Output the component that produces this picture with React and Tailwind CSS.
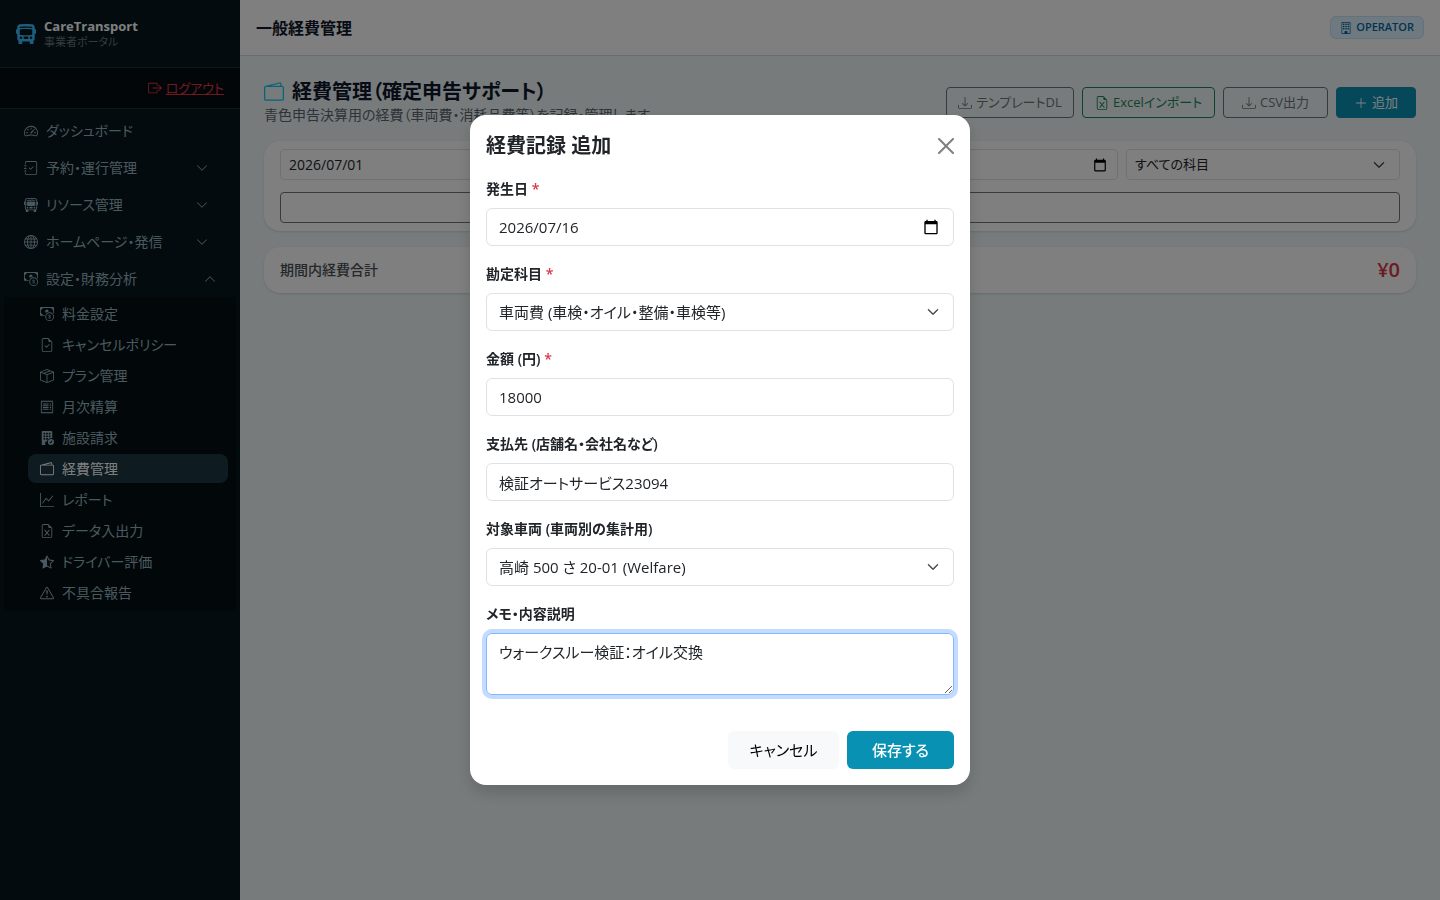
import {
  BsBoxArrowRight,
  BsBoxSeam,
  BsBuilding,
  BsBuildingFillCheck,
  BsBusFront,
  BsBusFrontFill,
  BsCashCoin,
  BsChevronDown,
  BsChevronUp,
  BsDownload,
  BsExclamationTriangle,
  BsFileEarmarkCheck,
  BsFileEarmarkExcel,
  BsGlobe,
  BsGraphUp,
  BsJournalCheck,
  BsPlusLg,
  BsReceipt,
  BsSpeedometer2,
  BsStarHalf,
  BsWallet2,
} from 'react-icons/bs';

const MENU = [
  { label: 'ダッシュボード', icon: BsSpeedometer2 },
  { label: '予約・運行管理', icon: BsJournalCheck, group: true },
  { label: 'リソース管理', icon: BsBusFront, group: true },
  { label: 'ホームページ・発信', icon: BsGlobe, group: true },
  { label: '設定・財務分析', icon: BsCashCoin, group: true, open: true },
];

const SUBMENU = [
  { label: '料金設定', icon: BsCashCoin },
  { label: 'キャンセルポリシー', icon: BsFileEarmarkCheck },
  { label: 'プラン管理', icon: BsBoxSeam },
  { label: '月次精算', icon: BsReceipt },
  { label: '施設請求', icon: BsBuildingFillCheck },
  { label: '経費管理', icon: BsWallet2, active: true },
  { label: 'レポート', icon: BsGraphUp },
  { label: 'データ入出力', icon: BsFileEarmarkExcel },
  { label: 'ドライバー評価', icon: BsStarHalf },
  { label: '不具合報告', icon: BsExclamationTriangle },
];

function CalendarIcon({ className }) {
  return (
    <svg viewBox="0 0 24 24" className={className} fill="currentColor" aria-hidden="true">
      <path d="M20 3h-1V1h-2v2H7V1H5v2H4c-1.1 0-2 .9-2 2v16c0 1.100.9 2 2 2h16c1.100 0 2-.9 2-2V5c0-1.100-.9-2-2-2zm0 18H4V8h16v13z" />
    </svg>
  );
}

function CloseIcon() {
  return (
    <svg viewBox="0 0 16 16" className="size-4" fill="currentColor" aria-hidden="true">
      <path d="M.293.293a1 1 0 0 1 1.414 0L8 6.586 14.293.293a1 1 0 1 1 1.414 1.414L9.414 8l6.293 6.293a1 1 0 0 1-1.414 1.414L8 9.414l-6.293 6.293a1 1 0 0 1-1.414-1.414L6.586 8 .293 1.707a1 1 0 0 1 0-1.414z" />
    </svg>
  );
}

function Sidebar() {
  return (
    <aside className="w-60 shrink-0 bg-[#06161c] text-sm text-[#94b3bf]">
      <div className="flex h-17 items-center gap-2 border-b border-[#1c333d] px-4">
        <BsBusFrontFill size={20} className="text-[#38bdf8]" />
        <div>
          <p className="text-[13px] leading-4 font-bold text-white">CareTransport</p>
          <p className="text-[11px] leading-4 text-[#6c757d]">事業者ポータル</p>
        </div>
      </div>
      <div className="flex h-[41px] items-center justify-end border-b border-[#1c333d] bg-[#040d11] px-4">
        <a href="#logout" className="flex items-center gap-1 text-[13px] text-[#dc3545]">
          <BsBoxArrowRight size={14} />
          <span className="underline">ログアウト</span>
        </a>
      </div>
      <nav className="pt-[3px]">
        {MENU.map(({ label, icon: Icon, group, open }) => (
          <a key={label} href="#menu" className="flex h-[37px] items-center gap-2 px-6">
            <Icon size={14} />
            <span className="flex-1">{label}</span>
            {group && (open ? <BsChevronUp size={12} /> : <BsChevronDown size={12} className="mr-2" />)}
          </a>
        ))}
        <ul className="mx-1 flex flex-col gap-0.5 bg-[#050f14] pt-0.5 pb-1">
          {SUBMENU.map(({ label, icon: Icon, active }) => (
            <li key={label} className="pr-2 pl-6">
              <a
                href="#submenu"
                className={`flex h-[29px] items-center gap-2 rounded-lg px-3 ${active ? 'bg-[#1c3640] text-white' : ''}`}
              >
                <Icon size={14} />
                {label}
              </a>
            </li>
          ))}
        </ul>
      </nav>
    </aside>
  );
}

function ToolButton({ icon: Icon, className, children }) {
  return (
    <button
      type="button"
      className={`flex h-[31px] items-center justify-center gap-1 rounded border text-[13px] ${className}`}
    >
      <Icon size={14} />
      {children}
    </button>
  );
}

function PageHeader() {
  return (
    <div className="mb-4 flex items-center justify-between">
      <div>
        <h1 className="flex items-center gap-2 text-xl leading-6 font-semibold text-[#0f172a]">
          <BsWallet2 size={20} className="text-[#0dcaf0]" />
          経費管理（確定申告サポート）
        </h1>
        <p className="text-sm leading-[21px] text-[#5c6670]">
          青色申告決算用の経費（車両費・消耗品費等）を記録・管理します。
        </p>
      </div>
      <div className="flex gap-2">
        <ToolButton icon={BsDownload} className="w-32 border-[#6c757d] text-[#6c757d]">テンプレートDL</ToolButton>
        <ToolButton icon={BsFileEarmarkExcel} className="w-[133px] border-[#198754] text-[#198754]">
          Excelインポート
        </ToolButton>
        <ToolButton icon={BsDownload} className="w-[105px] border-[#6c757d] text-[#6c757d]">CSV出力</ToolButton>
        <ToolButton icon={BsPlusLg} className="w-20 border-[#0891b2] bg-[#0891b2] text-white">追加</ToolButton>
      </div>
    </div>
  );
}

function FilterDate({ label, value }) {
  return (
    <div className="col-span-3 flex h-[31px] items-center rounded border border-[#dee2e6] px-2 text-[#212529]">
      <input type="text" aria-label={label} defaultValue={value} className="min-w-0 flex-1 bg-transparent text-sm" />
      <button type="button" aria-label="カレンダー" className="mr-0.5">
        <CalendarIcon className="size-3.5 text-black" />
      </button>
    </div>
  );
}

function Filters() {
  return (
    <section className="mb-4 rounded-2xl bg-white px-4 py-2 shadow-sm">
      <div className="grid grid-cols-8 gap-x-2 gap-y-3">
        <FilterDate label="開始日" value="2026/07/01" />
        <FilterDate label="終了日" value="2026/07/31" />
        <div className="relative col-span-2">
          <select
            aria-label="科目"
            className="h-[31px] w-full appearance-none rounded border border-[#dee2e6] px-2 text-[13px] text-[#212529]"
          >
            <option>すべての科目</option>
          </select>
          <BsChevronDown size={12} className="pointer-events-none absolute top-2.5 right-[15px] stroke-1 text-[#343a40]" />
        </div>
        <button type="button" aria-label="検索" className="col-span-8 h-[31px] rounded border border-[#6c757d]" />
      </div>
    </section>
  );
}

const CONTROL = 'h-[38px] w-full rounded-md border border-[#dee2e6] bg-white px-3 text-[15px] text-[#212529]';

function Field({ id, label, required, children }) {
  return (
    <div className="mb-4">
      <label htmlFor={id} className="mb-[7px] block text-sm leading-6 font-semibold text-[#212529]">
        {label}
        {required && <span className="text-[#dc3545]"> *</span>}
      </label>
      {children}
    </div>
  );
}

function SelectBox({ id, value }) {
  return (
    <div className="relative">
      <select id={id} className={`${CONTROL} appearance-none`}>
        <option>{value}</option>
      </select>
      <BsChevronDown size={12} className="pointer-events-none absolute top-[13px] right-[15px] stroke-1 text-[#343a40]" />
    </div>
  );
}

function ExpenseModal() {
  return (
    <div className="fixed inset-0 z-50 flex items-center justify-center bg-black/50">
      <form
        role="dialog"
        aria-labelledby="expense-title"
        className="w-[500px] rounded-2xl bg-white p-4 shadow-[0_8px_16px_rgba(0,0,0,0.15)]"
      >
        <div className="mb-4 flex items-center justify-between">
          <h2 id="expense-title" className="text-xl leading-[30px] font-semibold text-[#212529]">経費記録 追加</h2>
          <button type="button" aria-label="閉じる" className="text-black/50">
            <CloseIcon />
          </button>
        </div>
        <Field id="date" label="発生日" required>
          <div className={`${CONTROL} flex items-center`}>
            <input id="date" type="text" defaultValue="2026/07/16" className="min-w-0 flex-1" />
            <button type="button" aria-label="カレンダー" className="mr-0.5">
              <CalendarIcon className="size-4 text-black" />
            </button>
          </div>
        </Field>
        <Field id="account" label="勘定科目" required>
          <SelectBox id="account" value="車両費 (車検・オイル・整備・車検等)" />
        </Field>
        <Field id="amount" label="金額 (円)" required>
          <input id="amount" type="text" inputMode="numeric" defaultValue="18000" className={CONTROL} />
        </Field>
        <Field id="payee" label="支払先 (店舗名・会社名など)">
          <input id="payee" type="text" defaultValue="検証オートサービス23094" className={CONTROL} />
        </Field>
        <Field id="vehicle" label="対象車両 (車両別の集計用)">
          <SelectBox id="vehicle" value="高崎 500 さ 20-01 (Welfare)" />
        </Field>
        <Field id="memo" label="メモ・内容説明">
          <textarea
            id="memo"
            defaultValue="ウォークスルー検証：オイル交換"
            className="block h-[62px] w-full resize rounded-md border border-[#86b7fe] px-3 py-1.5 text-[15px] leading-6 text-[#212529] ring-4 ring-[#0d6efd]/25 outline-none"
          />
        </Field>
        <div className="flex justify-end gap-2 pt-5">
          <button type="button" className="h-[38px] w-[111px] rounded-md bg-[#f8f9fa] text-[15px] text-black">
            キャンセル
          </button>
          <button type="submit" className="h-[38px] w-[107px] rounded-md bg-[#0891b2] text-[15px] font-medium text-white">
            保存する
          </button>
        </div>
      </form>
    </div>
  );
}

export default function App() {
  return (
    <div
      lang="ja"
      className="flex min-h-screen bg-[#eef7f8] font-['Open_Sans','Noto_Sans_CJK_JP',sans-serif] [font-feature-settings:'palt']"
    >
      <Sidebar />
      <div className="min-w-0 flex-1">
        <header className="flex h-14 items-center justify-between border-b border-[#cfdde2] bg-white px-4">
          <p className="text-base font-semibold text-[#0f172a]">一般経費管理</p>
          <span className="flex h-[23px] items-center gap-1 rounded-md border border-[#bae6fd] bg-[#e0f2fe] px-[9px] text-[11px] font-semibold text-[#0369a1]">
            <BsBuilding size={12} />
            OPERATOR
          </span>
        </header>
        <main className="p-6">
          <PageHeader />
          <Filters />
          <section className="flex h-[46px] items-center justify-between rounded-2xl bg-white px-4 shadow-sm">
            <span className="text-sm font-medium text-[#495057]">期間内経費合計</span>
            <span className="text-xl font-semibold text-[#dc3545]">¥0</span>
          </section>
        </main>
      </div>
      <ExpenseModal />
    </div>
  );
}
